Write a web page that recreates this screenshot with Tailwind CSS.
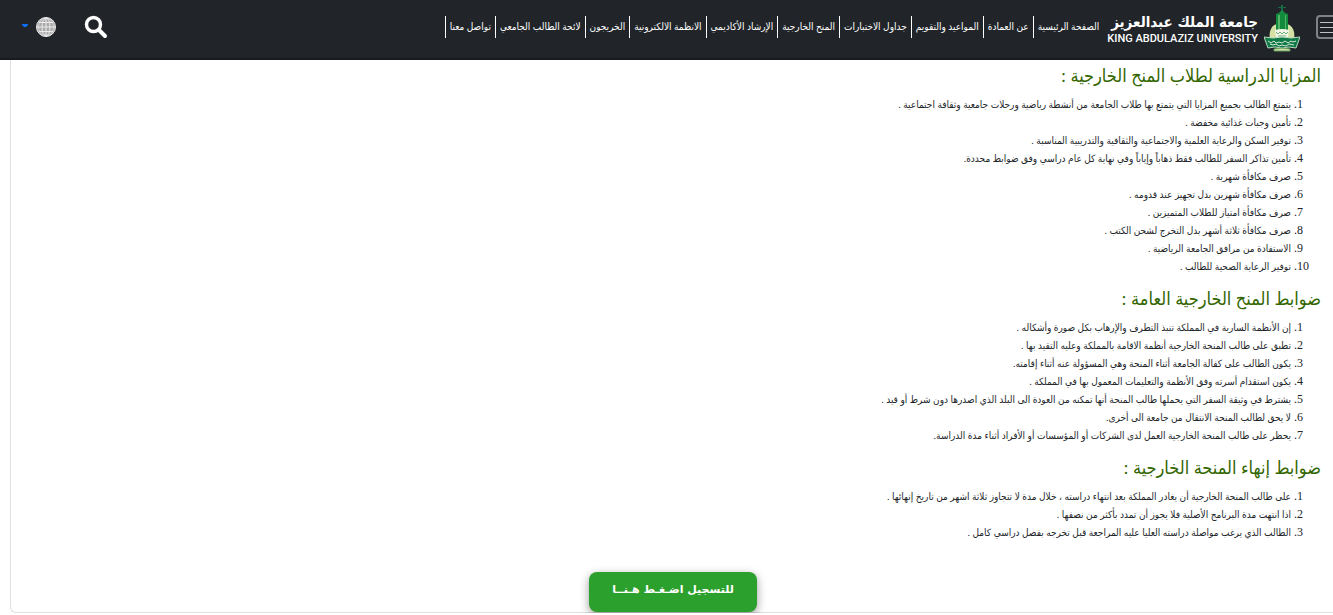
<!DOCTYPE html>
<html lang="ar" dir="rtl">
  <head>
    <meta charset="utf-8" />
    <title>المنح الخارجية</title>
    <meta name="viewport" content="width=device-width, initial-scale=1" />
    <script src="https://cdn.jsdelivr.net/npm/@tailwindcss/browser@4"></script>
  </head>
  <body class="bg-white text-[#212529] font-['Liberation_Serif','DejaVu_Sans_Condensed','DejaVu_Sans',serif] overflow-x-hidden">
  <!-- Navbar -->
  <header class="flex items-center h-15 bg-[#212529] border-b-2 border-[#1a1a21] text-white">
    <!-- Menu Toggle Button -->
    <button type="button" aria-label="القائمة" class="shrink-0 flex flex-col items-center justify-center gap-1 w-14 h-6 -mr-[39px] mb-1 border-2 border-[#808386] rounded-sm">
      <span class="w-12 h-px bg-[#c0c1c2]"></span>
      <span class="w-12 h-px bg-[#c0c1c2]"></span>
      <span class="w-12 h-px bg-[#c0c1c2]"></span>
    </button>
    <!-- Logo -->
    <a href="#" class="flex items-center gap-1.5 mr-4 shrink-0">
      <svg class="w-9 h-12" viewBox="0 0 36 48" fill="none">
        <path d="M6 35C4 23 10 18 18 18s14 5 12 17z" fill="#d5e0a4" />
        <path d="M17 0h2v2h3v1h-3v4h-2V3h-3V2h3z" fill="#176b43" />
        <path d="M13 10l5-5 5 5v4H13z" fill="#1c8a4c" />
        <path d="M12 9l6-2 6 2v19H12z" fill="#128a3c" />
        <path d="M14 10h2v16h-2z" fill="#59b56c" />
        <path d="M21 10h1v16h-1z" fill="#59b56c" />
        <path d="M11 25q7-2 14 0l-1 7H12z" fill="#f2f5e6" />
        <path d="M12 27l2 2 2-2 2 2 2-2 2 2 2-2M14 31h8" stroke="#6fae7c" />
        <path d="M0 32q9 2 18 0 9 2 18 0l-4 11q-7-2-14 0-7-2-14 0z" fill="#0f7a45" stroke="#b9d9c2" />
        <path d="M4 36l3 2 3-2 2 2 3-1 3 1 3-2 3 2 3-2 2 1 3-1M6 39l3 1 3-1 3 2 3-1 4 1 3-2 5 1" stroke="#d4e6d6" />
        <path d="M10 44q8-2 16 0v2H10z" fill="#d5e0a4" stroke="#5e9e5e" />
      </svg>
      <span class="flex flex-col whitespace-nowrap mt-1">
        <span class="text-[15px] leading-4 font-bold font-['DejaVu_Sans_Condensed','DejaVu_Sans',sans-serif]">جامعة الملك عبدالعزيز</span>
        <span dir="ltr" class="text-[11px] leading-[18px] font-medium font-[Roboto,sans-serif]">KING ABDULAZIZ UNIVERSITY</span>
      </span>
    </a>
    <!-- Navigation Links -->
    <nav class="flex mr-1 mb-1 text-[10px] leading-[22px] whitespace-nowrap">
      <a href="#" class="px-1 border-l border-white">الصفحة الرئيسية</a>
      <a href="#" class="px-1 border-l border-white">عن العمادة</a>
      <a href="#" class="px-1 border-l border-white">المواعيد والتقويم</a>
      <a href="#" class="px-1 border-l border-white">جداول الاختبارات</a>
      <a href="#" class="px-1 border-l border-white">المنح الخارجية</a>
      <a href="#" class="px-1 border-l border-white">الإرشاد الأكاديمي</a>
      <a href="#" class="px-1 border-l border-white">الانظمة الالكترونية</a>
      <a href="#" class="px-1 border-l border-white">الخريجون</a>
      <a href="#" class="px-1 border-l border-white">لائحة الطالب الجامعي</a>
      <a href="#" class="px-1 border-l border-white">تواصل معنا</a>
    </nav>
    <!-- Search and language -->
    <div class="flex items-center mr-auto ml-[22px] mb-1">
      <button type="button" aria-label="بحث">
        <svg class="w-6 h-6" viewBox="0 0 24 24" fill="none" stroke="#fff">
          <circle cx="9.5" cy="9.5" r="7" stroke-width="3.4" />
          <path d="M15 15l6 6" stroke-width="4" stroke-linecap="round" />
        </svg>
      </button>
      <button type="button" aria-label="اللغة" class="flex items-center gap-2 mr-7">
        <svg class="w-5 h-5" viewBox="0 0 20 20" fill="none" stroke="#ececec">
          <circle cx="10" cy="10" r="9.5" fill="#a9a9a9" />
          <ellipse cx="10" cy="10" rx="4" ry="9" />
          <ellipse cx="10" cy="10" rx="7.5" ry="9" stroke-width=".6" />
          <path d="M10 1v18M1 10h18M3 5.500h14M3 14.500h14" />
        </svg>
        <svg class="w-1.5 h-[3px] mb-1" viewBox="0 0 6 3"><path d="M0 0h6v1L4 3H2L0 1z" fill="#0d6efd" /></svg>
      </button>
    </div>
  </header>
  <!-- Scholarship rules -->
  <main class="ml-2.5 -mr-0.5 pt-1 border-l border-b border-[#dfdfdf] rounded-bl-md">
    <section class="pr-3.5">
      <h2 class="text-[18px] leading-6 text-[#336600]">المزايا الدراسية لطلاب المنح الخارجية :</h2>
      <ol class="list-decimal pr-[30px] mt-2 space-y-px text-[10px] leading-[17px] marker:text-[12px]">
        <li>يتمتع الطالب بجميع المزايا التي يتمتع بها طلاب الجامعة من أنشطة رياضية ورحلات جامعية وثقافة اجتماعية .</li>
        <li>تأمين وجبات غذائية مخفضة .</li>
        <li>توفير السكن والرعاية العلمية والاجتماعية والثقافية والتدريبية المناسبة .</li>
        <li>تأمين تذاكر السفر للطالب فقط ذهاباً وإياباً وفي نهاية كل عام دراسي وفق ضوابط محددة.</li>
        <li>صرف مكافأة شهرية .</li>
        <li>صرف مكافأة شهرين بدل تجهيز عند قدومه .</li>
        <li>صرف مكافأة امتياز للطلاب المتميزين .</li>
        <li>صرف مكافأة ثلاثة أشهر بدل التخرج لشحن الكتب .</li>
        <li>الاستفادة من مرافق الجامعة الرياضية .</li>
        <li>توفير الرعاية الصحية للطالب .</li>
      </ol>
    </section>
    <section class="mt-3 pr-3.5">
      <h2 class="text-[18px] leading-6 text-[#336600]">ضوابط المنح الخارجية العامة :</h2>
      <ol class="list-decimal pr-[30px] mt-2 space-y-px text-[10px] leading-[17px] marker:text-[12px]">
        <li>إن الأنظمة السارية في المملكة تنبذ التطرف والإرهاب بكل صورة وأشكاله .</li>
        <li>تطبق على طالب المنحة الخارجية أنظمة الاقامة بالمملكة وعليه التقيد بها .</li>
        <li>يكون الطالب على كفالة الجامعة أثناء المنحة وهي المسؤولة عنه أثناء إقامته.</li>
        <li>يكون استقدام أسرته وفق الأنظمة والتعليمات المعمول بها في المملكة .</li>
        <li>يشترط في وثيقة السفر التي يحملها طالب المنحة أنها تمكنه من العودة الى البلد الذي اصدرها دون شرط أو قيد .</li>
        <li>لا يحق لطالب المنحة الانتقال من جامعة الى أخرى.</li>
        <li>يحظر على طالب المنحة الخارجية العمل لدى الشركات أو المؤسسات أو الأفراد أثناء مدة الدراسة.</li>
      </ol>
    </section>
    <section class="mt-3 pr-3.5">
      <h2 class="text-[18px] leading-6 text-[#336600]">ضوابط إنهاء المنحة الخارجية :</h2>
      <ol class="list-decimal pr-[30px] mt-2 space-y-px text-[10px] leading-[17px] marker:text-[12px]">
        <li>على طالب المنحة الخارجية أن يغادر المملكة بعد انتهاء دراسته ، خلال مدة لا تتجاوز ثلاثة اشهر من تاريخ إنهائها .</li>
        <li>اذا انتهت مدة البرنامج الأصلية فلا يجوز أن تمدد بأكثر من نصفها .</li>
        <li>الطالب الذي يرغب مواصلة دراسته العليا عليه المراجعة قبل تخرجه بفصل دراسي كامل .</li>
      </ol>
    </section>
    <div class="flex justify-center mt-[31px]">
      <button type="button" class="w-42 h-10 pb-1 rounded-lg bg-[#2ca02c] text-white text-[11px] font-bold font-['DejaVu_Sans',sans-serif] shadow-[0_3px_10px_rgba(0,0,0,0.4)]">للتسجيل اضـغـط هـنــا</button>
    </div>
  </main>
  </body>
</html>
